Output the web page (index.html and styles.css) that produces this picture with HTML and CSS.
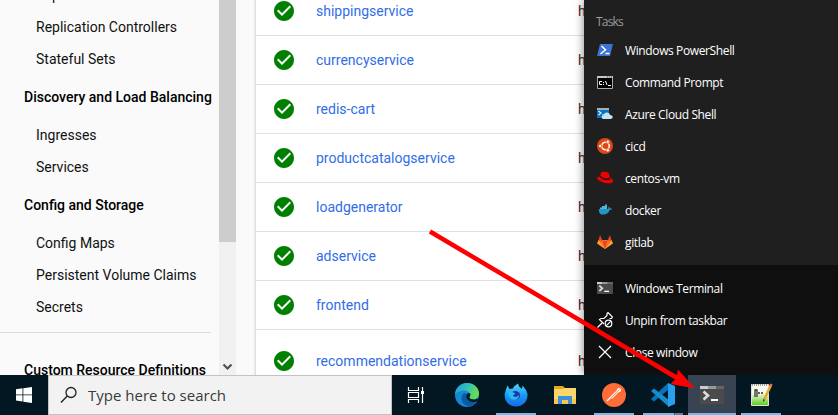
FILE: index.html
```html
<!DOCTYPE html>
<html lang="en">
<head>
<meta charset="utf-8">
<title>Workloads</title>
<link rel="stylesheet" href="styles.css">
</head>
<body>
<svg width="0" height="0" class="defs">
  <symbol id="check" viewBox="0 0 24 24"><path fill="#008000" d="M12 2C6.480 2 2 6.480 2 12s4.480 10 10 10 10-4.480 10-10S17.520 2 12 2zm-2 15l-5-5 1.410-1.410L10 14.170l7.590-7.590L19 8l-9 9z"/></symbol>
  <symbol id="terminal" viewBox="0 0 24 18"><path fill="#4b4b4b" d="M0 0h24v18H0z"/><path fill="#ccc" d="M0 0h8v3H0z"/><path fill="#999" d="M8 0h8v3H8z"/><path fill="#666" d="M16 0h8v3h-8z"/><path d="M3.500 5.500l4.500 4-4.500 4" fill="none" stroke="#ddd" stroke-width="2.600"/><path fill="#fff" d="M11 13h7v2h-7z"/></symbol>
</svg>
<div class="screen">
  <div class="desktop">
    <nav class="sidebar">
      <ul class="nav">
        <li>Replica Sets</li>
        <li>Replication Controllers</li>
        <li>Stateful Sets</li>
        <li class="head">Discovery and Load Balancing</li>
        <li>Ingresses</li>
        <li>Services</li>
        <li class="head">Config and Storage</li>
        <li>Config Maps</li>
        <li>Persistent Volume Claims</li>
        <li>Secrets</li>
        <li class="rule"></li>
        <li class="head">Custom Resource Definitions</li>
      </ul>
      <div class="scrollbar"><div class="thumb"></div><svg width="17" height="17" viewBox="0 0 17 17"><path d="M4.500 6.500l4 4 4-4" fill="none" stroke="#505050" stroke-width="2.200"/></svg></div>
    </nav>
    <main class="table">
      <div class="row"><svg><use href="#check"/></svg><a>shippingservice</a><span>h</span></div>
      <div class="row"><svg><use href="#check"/></svg><a>currencyservice</a><span>h</span></div>
      <div class="row"><svg><use href="#check"/></svg><a>redis-cart</a><span>h</span></div>
      <div class="row"><svg><use href="#check"/></svg><a>productcatalogservice</a><span>h</span></div>
      <div class="row"><svg><use href="#check"/></svg><a>loadgenerator</a><span>h</span></div>
      <div class="row"><svg><use href="#check"/></svg><a>adservice</a><span>h</span></div>
      <div class="row"><svg><use href="#check"/></svg><a>frontend</a><span>h</span></div>
      <div class="row tall"><svg><use href="#check"/></svg><a>recommendationservice</a><span>h</span></div>
    </main>
    <aside class="jumplist">
      <div class="tasks">
        <div class="title">Tasks</div>
        <div class="item"><svg viewBox="0 0 16 16"><path fill="#3b74d4" d="M3 2h13l-3 12H0z"/><path d="M4.500 4l4 3.700L3.500 12M8.500 11.500h4" fill="none" stroke="#fff" stroke-width="1.500"/></svg><b>Windows PowerShell</b></div>
        <div class="item"><svg viewBox="0 0 16 16"><path fill="#000" stroke="#aaa" d="M.5 2.500h15v12H.5z"/><path fill="#c4c8cc" d="M0 2h16v2H0z"/><path stroke="#555" stroke-dasharray="1 1" d="M10 3h5"/><path d="M5 7.500H2.500v3H5M6.500 8v1M6.500 10v1M8.500 7l1.500 4M11 11.500h3" fill="none" stroke="#fff"/></svg><b>Command Prompt</b></div>
        <div class="item"><svg viewBox="0 0 16 16"><path fill="#0873c4" d="M0 2h12v10H0z"/><path fill="#a9b0b5" d="M0 2h12v2H0z"/><path d="M1.500 5l2.500 2-2.500 2M5 9h2.500" fill="none" stroke="#fff" stroke-width="1.100"/><path fill="#c3e3f5" d="M7 13c-3 0-3-3.400-.5-3.500C7 6 12 5.500 13 9c3.500 0 3.500 4 .5 4z"/></svg><b>Azure Cloud Shell</b></div>
        <div class="item"><svg viewBox="0 0 16 16"><circle cx="8" cy="8" r="8" fill="#dd4814"/><circle cx="8.500" cy="8" r="3.800" fill="none" stroke="#fff" stroke-width="1.500"/><g fill="#fff" stroke="#dd4814" stroke-width=".8"><circle cx="3.200" cy="8" r="1.700"/><circle cx="10.800" cy="3.700" r="1.700"/><circle cx="10.800" cy="12.300" r="1.700"/></g></svg><b>cicd</b></div>
        <div class="item"><svg viewBox="0 0 16 16"><path fill="#e00" d="M4 3c1-2 3-.8 4-1 3-.5 4 1 5 5.500 3 1.300 4 4 2 5.300C11 14.500 1 11.500.2 8.500 0 7 1.500 6.700 3 6.700z"/><path d="M3.300 6.500c2 2.700 7 3.700 9.700 2" fill="none" stroke="#171717" stroke-width="1.500"/></svg><b>centos-vm</b></div>
        <div class="item"><svg viewBox="0 0 16 16"><path fill="#2496c5" d="M2 7h9c.8-1 .2-2 .8-2.500.8.5 1 1 1 1.700 1 0 1.700.2 2.200.5-.5 1.200-1.500 1.300-2.500 1.300C11.500 11.500 9 12.500 6 12.500c-3 0-4.500-2-4-5.500z"/><path fill="#4fb4d7" d="M3 5.500h7V7H3zM5 4h5v1.500H5zM8 2.500h2V4H8z"/></svg><b>docker</b></div>
        <div class="item"><svg viewBox="0 0 16 16"><path fill="#fca326" d="M1.500 6L0 9.500 8 15l8-5.500L14.500 6z"/><path fill="#fc6d26" d="M1.500 6H6l2 9zM14.500 6H10l-2 9z"/><path fill="#e24329" d="M3 1l2.500 5.500h5L13 1l1.500 5.500h-4L8 15 5.500 6.500h-4z"/></svg><b>gitlab</b></div>
      </div>
      <div class="actions">
        <div class="item"><svg viewBox="0 -3 24 24"><use href="#terminal" width="24" height="18"/></svg><b>Windows Terminal</b></div>
        <div class="item"><svg viewBox="0 0 16 16" fill="none" stroke="#fff" stroke-width="1.200"><path d="M0.500 15.500L5 11M7 12L2.500 7.500 4 6.500l3 0L10 3.500l0-2 1-1 4.500 4.500-1 1.500-2 0"/><circle cx="11.500" cy="11.500" r="3.300"/><path d="M9.300 13.700l4.400-4.400"/></svg><b>Unpin from taskbar</b></div>
        <div class="item"><svg viewBox="0 0 16 16"><path d="M2 2l12 12M14 2L2 14" stroke="#fff" stroke-width="1.200"/></svg><b>Close window</b></div>
      </div>
    </aside>
  </div>
  <footer class="taskbar">
    <div class="start"><svg width="16" height="16" viewBox="0 0 16 16"><path fill="#fff" d="M0 2.200L6.500 1.300v6.200H0zM7.300 1.200L16 0v7.500H7.300zM0 8.300h6.500v6.200L0 13.600zM7.300 8.300H16V16l-8.700-1.200z"/></svg></div>
    <div class="search"><svg width="18" height="18" viewBox="0 0 18 18"><circle cx="11" cy="6.500" r="5" fill="none" stroke="#222" stroke-width="1.300"/><path d="M7.300 10L1 16.500" stroke="#222" stroke-width="1.400"/></svg><b>Type here to search</b></div>
    <div class="apps">
      <div class="app view"><svg viewBox="0 0 24 24" fill="none" stroke="#fff" stroke-width="1.200"><path d="M4.500 4v3.500h10V4M4.500 20v-3.500h10V20M4.500 9.500h10v5h-10zM18.500 4v16"/><path fill="#fff" stroke="none" d="M17 8h3v3h-3z"/></svg></div>
      <div class="app"><svg viewBox="0 0 24 24"><defs><linearGradient id="e1" x2="1" y2=".3"><stop stop-color="#1b9de2"/><stop offset=".6" stop-color="#36c4b4"/><stop offset="1" stop-color="#6bdc4b"/></linearGradient></defs><circle cx="12" cy="12" r="12" fill="#1687d5"/><path fill="url(#e1)" d="M0 11C1 4 6 0 12 0c7 0 12 5 12 10.500 0 4-3.500 6-6.500 6-2.500 0-4-1-3-2.500C17 9 11 6.500 6 8c-3 .8-5 2-6 3z"/><path fill="#0c59a4" d="M9 10c-5 5-2 12 5 13.700 3-.5 6-3 7.500-5.700C17 21 10 18 12 11z"/><path fill="#041a25" d="M14 10c3 1 .5 3 .5 4.200 0 2.300 5.500 3.300 9.500.8-.5 1.500-1 2.500-2 3.500-5 2-9.500-.5-10.500-4-.5-2 .5-4.500 2.500-4.500z"/></svg></div>
      <div class="app open"><svg viewBox="0 0 24 24"><defs><linearGradient id="f1" y2="1" x2="0"><stop stop-color="#49dcfc"/><stop offset=".5" stop-color="#189cf5"/><stop offset="1" stop-color="#1769e8"/></linearGradient></defs><path fill="url(#f1)" d="M3.500 2.500l2 3.500 3.500-.5 1-2L14 .5l1 3 3 2.500.5-3.500L22 7l1.500 4C24 18 19 23.500 12 23.500S0 18 .7 11L2 6.500z"/><path fill="#2532a4" d="M8.500 9c2-2 7-1 7.500 2.500.5 3-2 5-4.500 5S7 14 7.500 11z"/><path fill="#28baf5" d="M4 9c2.500-1.500 3.500-.3 5 .2l2.500 1.300L9 12.500c1.500 2.500 5 1.500 6-1 1 5.500-7.500 7.500-10 2z"/></svg></div>
      <div class="app"><svg viewBox="0 0 24 24"><path fill="#e5a51d" d="M1 3h9l2 2v4H1z"/><path fill="#fbd66b" d="M1 6h9l2-1h11v16H1z"/><path fill="#f8c64f" d="M1 16h22v5H1z"/><path fill="#3d91dc" d="M5 13h14v8h-4v-4H9v4H5z"/></svg></div>
      <div class="app open"><svg viewBox="0 0 24 24"><circle cx="12" cy="12" r="12" fill="#ff6c37"/><path d="M5 18L13 10" stroke="#fff" stroke-width="1.400"/><path d="M9 15l7-7" stroke="#ffe7dc" stroke-width="2.600"/><circle cx="17" cy="7" r="2.100" fill="#fff"/><path d="M9 15l9-9" stroke="#ff7b4b" stroke-width=".7"/></svg></div>
      <div class="app open split"><svg viewBox="0 0 24 24"><path fill="#0873b8" d="M17 0v7L3 18.500 0 16z"/><path fill="#168bd0" d="M0 8l3-2.500L18 17v7z"/><path fill="#27a1ef" d="M17 0l7 3v18l-7 3z"/></svg></div>
      <div class="app open active"><svg viewBox="0 -3 24 24"><use href="#terminal" width="24" height="18"/></svg></div>
      <div class="app open"><svg viewBox="0 0 24 24"><defs><linearGradient id="n1" y2="1" x2="0"><stop offset=".4" stop-color="#f7faed"/><stop offset="1" stop-color="#59cc13"/></linearGradient></defs><path fill="url(#n1)" stroke="#ddd" d="M2.500 1.500h17v21h-17z"/><path stroke="#555" stroke-dasharray="1 1" d="M3 2h16"/><path d="M6 14V7h2v7M9 10h2M12 10h2" fill="none" stroke="#333" stroke-width="1.300"/><path d="M22 2l-7 15" stroke="#e9a72f" stroke-width="2.600"/><path d="M22.500 1l-1 2" stroke="#e66b5c" stroke-width="2.600"/><path d="M14.500 16l-.5 3 2-2z" fill="#222"/></svg></div>
    </div>
  </footer>
  <svg class="arrow" width="838" height="415"><path d="M430 231.500L678 378.500" stroke="#f00" stroke-width="4.500"/><path fill="#f00" d="M695 388.500l-24.500-4.500 6-6 1.500-8.500z"/></svg>
</div>
</body>
</html>
```
FILE: styles.css
```css
* { box-sizing: border-box; }
body { margin: 0; }
b { font-weight: 400; }
.defs { display: none; }
.screen { position: relative; width: 838px; height: 415px; overflow: hidden; display: flex; flex-direction: column; }
.desktop { height: 375px; display: flex; overflow: hidden; background: #fafafa; font-family: Roboto, sans-serif; font-size: 14px; color: #000; }
.sidebar { width: 236px; flex: none; display: flex; }
.nav { list-style: none; margin: -21px 0 0; padding: 0; width: 219px; white-space: nowrap; }
.nav li { height: 32px; line-height: 32px; padding-left: 36px; color: #111; }
.nav .head { height: 44px; line-height: 44px; padding-left: 24px; font-weight: 500; color: #000; }
.nav .rule { height: 1px; margin: 9px 8px 15px 0; background: #dadada; }
.scrollbar { width: 17px; background: #f1f1f1; display: flex; flex-direction: column; justify-content: space-between; }
.thumb { height: 242px; background: #cdcdcd; }
.table { width: 329px; flex: none; margin-left: 19px; background: #fff; border-left: 1px solid #e0e0e0; box-shadow: 0 0 2px #ccc; margin-top: -13px; height: 400px; overflow: hidden; }
.row { height: 49px; border-bottom: 1px solid #e0e0e0; display: flex; align-items: center; }
.row svg { width: 24px; height: 24px; margin-left: 16px; flex: none; }
.row a { margin-left: 20px; width: 262px; flex: none; color: #326de6; }
.row span { color: #4a2430; }
.row.tall { height: 62px; border: 0; }
.jumplist { position: relative; width: 254px; flex: none; background: #1f1f1f; box-shadow: 0 0 9px rgba(0,0,0,.5); font: 12px "Open Sans", sans-serif; letter-spacing: -.38px; color: #fff; }
.tasks { height: 265px; padding-top: 9px; }
.title { height: 25px; line-height: 26px; padding-left: 12px; letter-spacing: -.8px; color: #9b9b9b; }
.actions { height: 110px; padding-top: 7px; background: #0f0f0f; }
.item { height: 32px; display: flex; align-items: center; padding-left: 13px; gap: 12px; white-space: nowrap; }
.item svg { width: 16px; height: 16px; }
.item b { padding-top: 1px; }
.taskbar { height: 40px; background: #021722; display: flex; }
.start { width: 48px; display: flex; align-items: center; justify-content: center; }
.search { width: 344px; background: #f2f2f2; border: 1px solid #c4c4c4; display: flex; align-items: center; padding-left: 11px; gap: 10px; font: 15px "Open Sans", sans-serif; color: #3a3a3a; }
.apps { display: flex; gap: 1px; }
.app { width: 48px; height: 40px; display: flex; justify-content: center; align-items: center; position: relative; }
.app.view { margin-right: 2px; }
.app svg { width: 24px; height: 24px; }
.app.open::after { content: ""; position: absolute; left: 4px; right: 4px; bottom: 0; height: 2px; background: #76b9ed; }
.app.split::after { background: linear-gradient(90deg, #76b9ed 31px, #34556c 31px, #34556c 32px, #5486ac 32px); }
.app.active { background: #384452; }
.app.active::after { left: 0; right: 0; }
.arrow { position: absolute; left: 0; top: 0; }
```
